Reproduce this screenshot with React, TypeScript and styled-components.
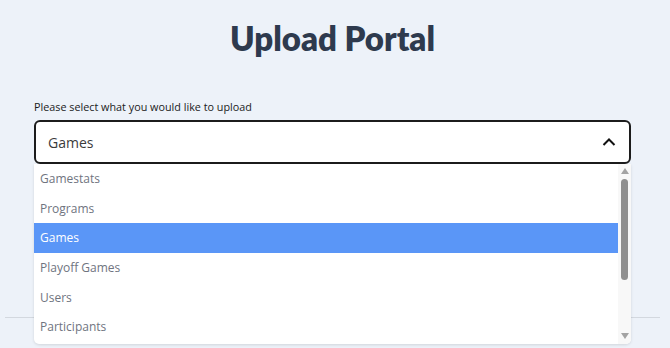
import React from "react";
import styled, { createGlobalStyle } from "styled-components";

const Global = createGlobalStyle`
  html, body { margin: 0; padding: 0; background: #edf2f9; }
  body { font-family: "Nunito", "Lato", "Open Sans", sans-serif; }
  * { box-sizing: border-box; }
`;

const Page = styled.div`
  width: 670px;
  height: 348px;
  overflow: hidden;
  background: #edf2f9;
  padding: 18px 10px 0 5px;
`;

const Title = styled.h1`
  margin: 0;
  text-align: center;
  font-family: "Lato", sans-serif;
  font-weight: 800;
  font-size: 33px;
  line-height: 40px;
  color: #2e3a4e;
`;

const Form = styled.div`
  padding: 0 29px;
  margin-top: 42px;
`;

const Label = styled.div`
  font-family: "Open Sans", sans-serif;
  font-size: 10.8px;
  line-height: 14px;
  color: #1b1b1b;
  margin-bottom: 6px;
`;

const SelectWrap = styled.div`
  position: relative;
`;

const SelectBox = styled.div`
  height: 44px;
  border: 2px solid #1c1c1c;
  border-radius: 6px;
  background: #fff;
  display: flex;
  align-items: center;
  justify-content: space-between;
  padding: 0 12px 0 12px;
  font-family: "Open Sans", sans-serif;
  font-size: 14px;
  color: #3b3b3b;
`;

const Divider = styled.hr`
  margin: 153px 0 0 0;
  border: none;
  border-top: 1px solid #d3d8df;
`;

const Menu = styled.div`
  position: absolute;
  left: 0;
  right: 0;
  top: 44px;
  height: 180px;
  background: #fff;
  border-radius: 0 0 5px 5px;
  box-shadow: 0 1px 3px rgba(0, 0, 0, 0.12);
  display: flex;
  overflow: hidden;
`;

const Options = styled.div`
  flex: 1;
`;

const Option = styled.div<{ $active?: boolean }>`
  height: 29.6px;
  display: flex;
  align-items: center;
  padding-left: 6px;
  font-family: "Open Sans", sans-serif;
  font-size: 12px;
  color: ${(p) => (p.$active ? "#ffffff" : "#6f7480")};
  background: ${(p) => (p.$active ? "#5a96f7" : "transparent")};
`;

const Track = styled.div`
  width: 13px;
  background: #f8f8f8;
  display: flex;
  flex-direction: column;
  align-items: center;
  padding: 2px 0 3px 0;
`;

const Arrow = styled.div`
  height: 10px;
  display: flex;
  align-items: center;
  justify-content: center;
`;

const Thumb = styled.div`
  width: 7px;
  height: 101px;
  margin-top: 3px;
  border-radius: 4px;
  background: #8f8f8f;
`;

const Spacer = styled.div`
  flex: 1;
`;

const items = ["Gamestats", "Programs", "Games", "Playoff Games", "Users", "Participants"];

export default function App() {
  return (
    <Page>
      <Global />
      <Title>Upload Portal</Title>
      <Form>
        <Label>Please select what you would like to upload</Label>
        <SelectWrap>
          <SelectBox>
            <span>Games</span>
            <svg width="16" height="16" viewBox="0 0 16 16">
              <path d="M2.5 11 L8 5.5 L13.5 11" fill="none" stroke="#111" strokeWidth="2" />
            </svg>
          </SelectBox>
          <Menu>
            <Options>
              {items.map((it) => (
                <Option key={it} $active={it === "Games"}>
                  {it}
                </Option>
              ))}
            </Options>
            <Track>
              <Arrow>
                <svg width="8" height="6" viewBox="0 0 8 6">
                  <path d="M0 6 L4 0 L8 6 Z" fill="#a3a3a3" />
                </svg>
              </Arrow>
              <Thumb />
              <Spacer />
              <Arrow>
                <svg width="8" height="6" viewBox="0 0 8 6">
                  <path d="M0 0 L4 6 L8 0 Z" fill="#a3a3a3" />
                </svg>
              </Arrow>
            </Track>
          </Menu>
        </SelectWrap>
      </Form>
      <Divider />
    </Page>
  );
}
